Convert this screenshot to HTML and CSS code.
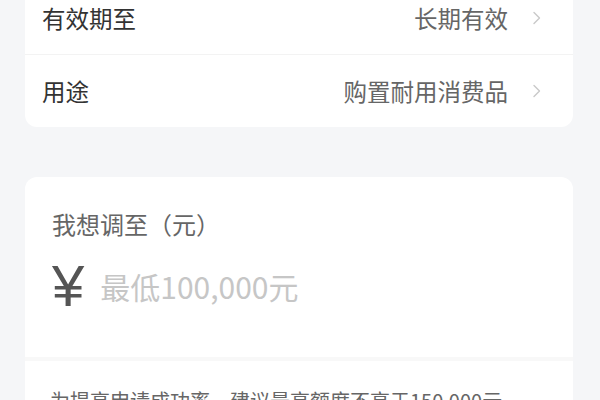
FILE: index.html
```html
<html lang="zh-CN">
<head>
    <meta charset="UTF-8">
    <meta name="viewport" content="width=device-width, initial-scale=1.0">
    <title>额度调整</title>
    <link rel="stylesheet" href="styles.css">
</head>
<body>

    <div class="page">

        <!-- Loan info card -->
        <div class="card info-card">
            <div class="info-row">
                <span class="info-label">有效期至</span>
                <span class="info-value">长期有效
                    <svg class="chevron" width="10" height="14" viewBox="0 0 10 14"><path d="M2 1.5 L7.5 7 L2 12.5" fill="none" stroke="#c9c9c9" stroke-width="1.4" stroke-linecap="round" stroke-linejoin="round"/></svg>
                </span>
            </div>
            <div class="info-row">
                <span class="info-label">用途</span>
                <span class="info-value">购置耐用消费品
                    <svg class="chevron" width="10" height="14" viewBox="0 0 10 14"><path d="M2 1.5 L7.5 7 L2 12.5" fill="none" stroke="#c9c9c9" stroke-width="1.4" stroke-linecap="round" stroke-linejoin="round"/></svg>
                </span>
            </div>
        </div>

        <!-- Amount input card -->
        <div class="card amount-card">
            <div class="amount-main">
                <div class="amount-title">我想调至（元）</div>
                <div class="amount-input">
                    <span class="currency">¥</span>
                    <span class="placeholder">最低100,000元</span>
                </div>
            </div>
            <div class="amount-tip">为提高申请成功率，建议最高额度不高于150,000元</div>
        </div>

    </div>

</body>
</html>
```

FILE: styles.css
```css
/* Basic styling */
body {
    margin: 0;
    background-color: #f5f6f8;
    font-family: "Noto Sans CJK SC", "Noto Sans", sans-serif;
    color: #333;
    overflow: hidden;
}

.page {
    padding: 0 27px 0 25px;
}

.card {
    background-color: #fff;
    border-radius: 12px;
}

/* Info rows */
.info-card {
    margin-top: -18px;
}

.info-row {
    display: flex;
    align-items: center;
    justify-content: space-between;
    height: 72px;
    padding: 0 31px 0 17px;
    font-size: 23.5px;
}

.info-row + .info-row {
    border-top: 1px solid #f3f3f3;
}

.info-label {
    color: #333;
}

.info-value {
    display: flex;
    align-items: center;
    gap: 24px;
    color: #666;
}

/* Amount card */
.amount-card {
    margin-top: 50px;
}

.amount-main {
    padding: 32px 27px 0;
    height: 180px;
    box-sizing: border-box;
}

.amount-title {
    font-size: 24px;
    line-height: 30px;
    color: #666;
}

.amount-input {
    display: flex;
    align-items: center;
    gap: 16px;
    margin-top: 22px;
    height: 50px;
}

.currency {
    font-family: "Liberation Sans", sans-serif;
    font-size: 58px;
    color: #555;
    line-height: 50px;
}

.placeholder {
    font-size: 30px;
    color: #c6c6c6;
}

.amount-tip {
    border-top: 4px solid #f8f8f8;
    padding: 25px 25px;
    font-size: 20px;
    color: #666;
}
```
